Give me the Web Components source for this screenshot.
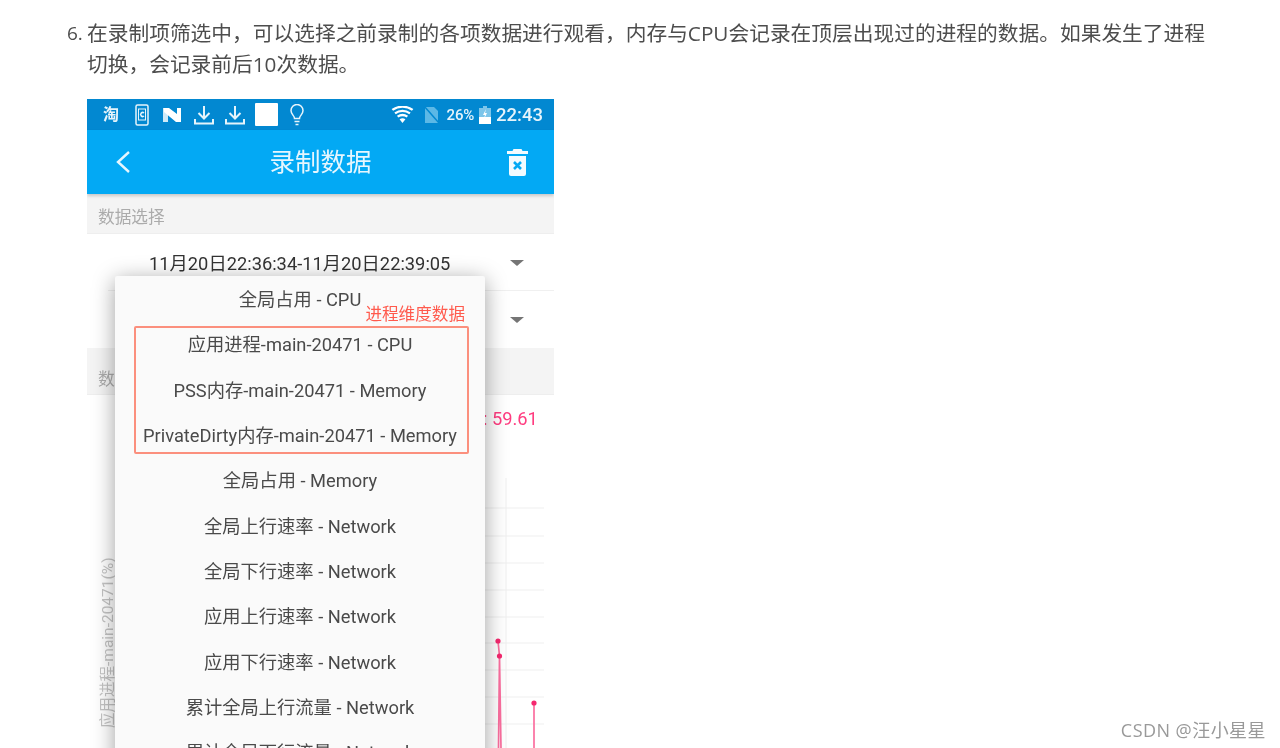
<!DOCTYPE html>
<html lang="zh">
<head>
<meta charset="utf-8">
<title>录制数据</title>
<style>
  html, body { margin: 0; height: 748px; overflow: hidden; background: #fff; }
  body { font-family: "Open Sans", "Noto Sans CJK SC", sans-serif; }
</style>
</head>
<body>
<doc-article>
  <doc-step number="6">在录制项筛选中，可以选择之前录制的各项数据进行观看，内存与CPU会记录在顶层出现过的进程的数据。如果发生了进程切换，会记录前后10次数据。</doc-step>
  <phone-shot>
    <status-bar></status-bar>
    <app-bar title="录制数据"></app-bar>
    <section-label>数据选择</section-label>
    <spinner-row>11月20日22:36:34-11月20日22:39:05</spinner-row>
    <spinner-row></spinner-row>
    <section-label tall>数据展示</section-label>
    <line-chart></line-chart>
    <popup-menu>
      <menu-item>全局占用 - CPU</menu-item>
      <menu-group label="进程维度数据">
        <menu-item>应用进程-main-20471 - CPU</menu-item>
        <menu-item>PSS内存-main-20471 - Memory</menu-item>
        <menu-item>PrivateDirty内存-main-20471 - Memory</menu-item>
      </menu-group>
      <menu-item>全局占用 - Memory</menu-item>
      <menu-item>全局上行速率 - Network</menu-item>
      <menu-item>全局下行速率 - Network</menu-item>
      <menu-item>应用上行速率 - Network</menu-item>
      <menu-item>应用下行速率 - Network</menu-item>
      <menu-item>累计全局上行流量 - Network</menu-item>
      <menu-item>累计全局下行流量 - Network</menu-item>
    </popup-menu>
  </phone-shot>
  <water-mark>CSDN @汪小星星</water-mark>
</doc-article>

<script>
(function () {
    const PHONE_FONT = 'Roboto, "Noto Sans CJK SC", sans-serif';

    function define(name, css, html, setup) {
        customElements.define(name, class extends HTMLElement {
            constructor() {
                super();
                this.attachShadow({ mode: 'open' });
                this.shadowRoot.innerHTML = `<style>${css}</style>${html}`;
            }
            connectedCallback() {
                if (setup) setup(this);
            }
        });
    }

    define('doc-article', `
        :host { display: block; padding: 18px 0 0 87px; position: relative; height: 730px; overflow: hidden; }
    `, `<slot></slot>`);

    define('doc-step', `
        :host {
            display: block; position: relative; width: 1125px; margin-bottom: 19px;
            font: 20.730px/31px "Open Sans", "Noto Sans CJK SC", sans-serif; color: #4d4d4d;
            filter: blur(.35px);
        }
        .num { position: absolute; left: -20px; top: 0; font-size: 19px; }
    `, `<span class="num"></span><slot></slot>`, el => {
        el.shadowRoot.querySelector('.num').textContent = el.getAttribute('number') + '.';
    });

    // the pasted phone screenshot is soft, hence the small blur
    define('phone-shot', `
        :host {
            display: block; position: relative; width: 467px; height: 649px; overflow: hidden;
            background: #fff; filter: blur(.7px); font-family: ${PHONE_FONT};
        }
    `, `<slot></slot>`);

    define('status-bar', `
        :host {
            display: flex; align-items: center; height: 31px; padding: 0 11px 0 16px;
            background: #0288d1; color: #e6f4fb; box-sizing: border-box;
        }
        svg { display: block; flex: none; }
        .tao { font-size: 16px; font-weight: 700; width: 16px; line-height: 16px; }
        .sq { width: 23px; height: 23px; background: #fff; border-radius: 1px; flex: none; }
        .spacer { flex: 1; }
        .pct { font-size: 15px; font-weight: 500; margin-left: 7px; letter-spacing: -.2px; }
        .time { font-size: 18.500px; font-weight: 500; margin-left: 5px; }
    `, `
        <span class="tao">淘</span>
        <svg style="margin-left:16px" width="14" height="22" viewBox="0 0 14 22" fill="none" stroke="#e6f4fb" stroke-width="1.500">
          <rect x="1" y="1" width="12" height="20" rx="1.500"/>
          <rect x="3.500" y="5" width="7" height="11" stroke-width="1"/>
          <path d="M9 9a2 2 0 1 0 0 3"/>
        </svg>
        <svg style="margin-left:14px" width="19" height="16" viewBox="0 0 19 16">
          <path fill="#cfeaf8" d="M0 1h5v14H0z"/>
          <path fill="#fff" d="M1 1h5l12 9v5h-5L1 5zM14 1h4v9h-4z"/>
        </svg>
        <svg style="margin-left:12px" width="20" height="20" viewBox="0 0 20 20" fill="none" stroke="#e6f4fb" stroke-width="2">
          <path d="M10 1v12M4.500 8l5.500 5.500L15.500 8M1 14v4.500h18V14"/>
        </svg>
        <svg style="margin-left:11px" width="20" height="20" viewBox="0 0 20 20" fill="none" stroke="#e6f4fb" stroke-width="2">
          <path d="M10 1v12M4.500 8l5.500 5.500L15.500 8M1 14v4.500h18V14"/>
        </svg>
        <span class="sq" style="margin-left:10px"></span>
        <svg style="margin-left:12px" width="14" height="22" viewBox="0 0 14 22" fill="none" stroke="#e6f4fb" stroke-width="1.500">
          <path d="M4.500 14.500C4.500 11.500 1 10.500 1 6.500a6 6 0 0 1 12 0c0 4-3.500 5-3.500 8z"/>
          <path d="M4.500 17.500h5M5.500 20.500h3"/>
        </svg>
        <span class="spacer"></span>
        <svg width="23" height="17" viewBox="0 0 22 17" fill="#fff" preserveAspectRatio="none">
          <path d="M11 17L8.200 13.200a4.700 4.700 0 0 1 5.600 0z"/>
          <path d="M7 11.600a6.800 6.800 0 0 1 8 0l1.300-1.800a9 9 0 0 0-10.600 0z"/>
          <path d="M4.500 8.200a11 11 0 0 1 13 0l1.300-1.800a13.200 13.200 0 0 0-15.600 0z"/>
          <path d="M2 4.800a15.200 15.200 0 0 1 18 0L21.400 3a17.500 17.500 0 0 0-20.800 0z"/>
        </svg>
        <svg style="margin-left:9px" width="17" height="18" viewBox="0 0 17 18">
          <path fill="#5cb8e6" d="M2 1h9l4 4v12H2z"/>
          <path stroke="#0288d1" stroke-width="1.500" d="M1 0l15 17"/>
        </svg>
        <span class="pct">26%</span>
        <svg style="margin-left:5px" width="12" height="18" viewBox="0 0 12 18">
          <path fill="#7cc5ea" d="M4 0h4v2h4v16H0V2h4z"/>
          <path fill="#fff" d="M0 11h12v7H0z"/>
          <path fill="#fff" d="M7 3L4 9h2l-1 4 3-6H6z"/>
        </svg>
        <span class="time">22:43</span>
    `);

    define('app-bar', `
        :host {
            display: flex; align-items: center; justify-content: center; position: relative;
            height: 64px; box-sizing: border-box; padding-bottom: 5px;
            background: #03a9f4; color: #e6f6fe; font-size: 25.500px;
            box-shadow: 0 2px 3px rgba(0,0,0,.18); z-index: 1;
        }
        button {
            all: unset; position: absolute; top: 0; height: 100%; display: flex; align-items: center;
        }
        .back { left: 28px; }
        .del { right: 26px; }
    `, `
        <button class="back" aria-label="返回">
          <svg width="16" height="24" viewBox="0 0 16 24" fill="none" stroke="#e6f6fe" stroke-width="2.400"><path d="M14 2L3 12l11 10"/></svg>
        </button>
        <span class="title"></span>
        <button class="del" aria-label="删除">
          <svg width="21" height="27" viewBox="0 0 21 27">
            <path fill="#f2fbff" d="M6.500 0h8l1 2H21v3H0V2h5.500zM2 7h17v18a2 2 0 0 1-2 2H4a2 2 0 0 1-2-2z"/>
            <path stroke="#03a9f4" stroke-width="2.600" d="M7 13l7 7M14 13l-7 7"/>
          </svg>
        </button>
    `, el => {
        el.shadowRoot.querySelector('.title').textContent = el.getAttribute('title');
        el.removeAttribute('title');
    });

    define('section-label', `
        :host {
            display: flex; align-items: center; height: 40px; padding: 4px 0 0 11px; box-sizing: border-box;
            background: #f4f4f4; color: #ababab; font-size: 16.700px; border-bottom: 1px solid #eee;
        }
        :host([tall]) { height: 47px; padding-top: 13px; }
    `, `<slot></slot>`);

    define('spinner-row', `
        :host {
            display: flex; align-items: center; height: 57px; position: relative;
            margin-left: 21px; padding-left: 41px; box-sizing: border-box;
            color: #333; font-size: 18.300px; border-bottom: 1px solid #f0f0f0; background: #fff;
        }
        :host(:last-of-type) { border-bottom: 0; }
        .arrow {
            position: absolute; right: 30px; top: 26px; width: 0; height: 0;
            border: 7px solid transparent; border-top: 6px solid #757575; border-bottom: 0;
        }
    `, `<slot></slot><span class="arrow"></span>`);

    define('line-chart', `
        :host { display: block; position: relative; height: 354px; }
        svg { display: block; }
        .val { fill: #ff3d80; font-size: 18.300px; }
        .axis { fill: #c4c4c4; font-size: 15.500px; }
    `, `
        <svg width="467" height="354" viewBox="0 0 467 354" font-family='${PHONE_FONT}'>
          <text class="val" x="396" y="30">: 59.61</text>
          <text class="axis" transform="translate(26 333) rotate(-90)">应用进程-main-20471(%)</text>
          <g stroke="#efefef" stroke-width="1">
            <path d="M419 83v270"/>
            <path d="M30 113h427M30 141h427M30 168h427M30 195h427M30 222h427M30 248h427M30 275h427M30 302h427M30 329h427"/>
          </g>
          <g fill="none" stroke="#fb6f9f" stroke-width="1.700">
            <path d="M411 246l1.500 15-1 93M412.500 261l1.500 93M447 308v46"/>
          </g>
          <g fill="#f5286f">
            <circle cx="411" cy="246" r="2.600"/>
            <circle cx="412.500" cy="261" r="2.600"/>
            <circle cx="447" cy="308" r="2.600"/>
          </g>
        </svg>
    `);

    define('popup-menu', `
        :host {
            display: block; position: absolute; left: 28px; top: 177px; width: 370px;
            background: #fafafa; border-radius: 2px; z-index: 2;
            box-shadow: 0 4px 22px rgba(0,0,0,.38);
        }
    `, `<slot></slot>`);

    define('menu-item', `
        :host {
            display: flex; align-items: center; justify-content: center; height: 45.330px;
            box-sizing: border-box; padding-bottom: 1px;
            color: #4a4a4a; font-size: 18.300px; white-space: nowrap;
        }
    `, `<slot></slot>`);

    define('menu-group', `
        :host { display: block; position: relative; }
        .box {
            position: absolute; left: 19px; right: 16px; top: 5px; bottom: 3px;
            border: 2px solid #fb8f7d; border-radius: 2px;
        }
        .label {
            position: absolute; right: 20px; top: -16px; font-size: 16.600px; line-height: 20px;
            color: #ff5a4d;
        }
    `, `<span class="box"></span><span class="label"></span><slot></slot>`, el => {
        el.shadowRoot.querySelector('.label').textContent = el.getAttribute('label');
    });

    define('water-mark', `
        :host {
            position: absolute; right: 14px; bottom: 7px; line-height: 22px;
            font-size: 18px; color: #999; letter-spacing: .45px; filter: blur(.4px);
            font-family: "Open Sans", "Noto Sans CJK SC", sans-serif;
        }
    `, `<slot></slot>`);
})();
</script>
</body>
</html>
